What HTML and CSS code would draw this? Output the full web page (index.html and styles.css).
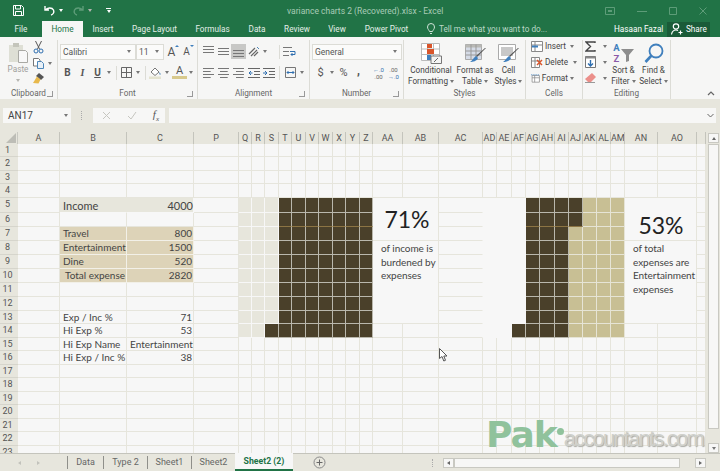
FILE: index.html
```html
<!DOCTYPE html>
<html>
<head>
    <meta charset="utf-8">
    <title>variance charts 2 (Recovered).xlsx - Excel</title>
    <link rel="stylesheet" href="styles.css">
</head>
<body>
    <div class="titlebar">
        <div class="qat">
            <svg class="qat-save" width="11" height="11" viewBox="0 0 11 11"><path d="M.5.500h8l2 2v8H.5z" fill="none" stroke="#fff"/><path d="M2.500 1v3h5V1M2.500 10V6.500h6V10" fill="none" stroke="#fff"/></svg>
            <svg class="qat-undo" width="11" height="11" viewBox="0 0 11 11"><path d="M1 1v4h4M1.500 5C3 2.500 8 2 9.500 5c1 2.500-.5 4.500-2.500 5" fill="none" stroke="#fff" stroke-width="1.400"/></svg>
            <span class="caret caret-white qat-caret"></span>
            <svg class="qat-redo" width="11" height="11" viewBox="0 0 11 11"><path d="M10 1v4H6M9.500 5C8 2.500 3 2 1.500 5c-1 2.500.5 4.500 2.500 5" fill="none" stroke="#5d9c78" stroke-width="1.400"/></svg>
            <span class="caret caret-faded qat-caret"></span>
            <span class="qat-custom"><span class="qat-bar"></span><span class="caret caret-white"></span></span>
        </div>
        <div class="doc-title">variance charts 2 (Recovered).xlsx - Excel</div>
        <div class="window-btns">
            <svg width="10" height="8" viewBox="0 0 10 8"><path d="M.5.500h9v7h-9z" fill="none" stroke="#5d9c78"/><path d="M3 3h4v2H3z" fill="#5d9c78"/></svg>
            <svg width="10" height="8" viewBox="0 0 10 8"><path d="M0 4.500h10" stroke="#5d9c78"/></svg>
            <svg width="8" height="8" viewBox="0 0 8 8"><path d="M.5.500h7v7h-7z" fill="none" stroke="#5d9c78"/></svg>
            <svg width="8" height="8" viewBox="0 0 8 8"><path d="M.5.500l7 7M7.500.500l-7 7" stroke="#5d9c78"/></svg>
        </div>
    </div>

    <div class="tabs">
        <span class="tab">File</span>
        <span class="tab tab-active">Home</span>
        <span class="tab">Insert</span>
        <span class="tab">Page Layout</span>
        <span class="tab">Formulas</span>
        <span class="tab">Data</span>
        <span class="tab">Review</span>
        <span class="tab">View</span>
        <span class="tab">Power Pivot</span>
        <span class="tell-me">
            <svg width="8" height="12" viewBox="0 0 8 12"><path d="M2.500 8.500C2 7 .5 6 .5 4a3.500 3.500 0 0 1 7 0c0 2-1.500 3-2 4.500zM3 10.500h2" fill="none" stroke="#cfe3d7"/></svg>
            Tell me what you want to do...
        </span>
        <span class="user">Hasaan Fazal</span>
        <span class="share">
            <svg width="12" height="12" viewBox="0 0 12 12"><circle cx="5" cy="3.500" r="2.700" fill="none" stroke="#fff" stroke-width="1.200"/><path d="M.5 11.500c.5-3 2-4.500 4.500-4.500 1 0 1.500.2 2 .5M9.500 7.500v4M7.500 9.500h4" fill="none" stroke="#fff" stroke-width="1.200"/></svg>
            Share
        </span>
    </div>

    <div class="ribbon">
        <!-- Clipboard -->
        <div class="group group-clipboard">
            <div class="group-body clip-body">
                <div class="paste">
                    <svg width="21" height="21" viewBox="0 0 21 21"><path d="M1 3h14v17H1z" fill="#dedfd5"/><path d="M5 1h6v4H5z" fill="#c4c5bb"/><path d="M10.500 8.500h7l2 2v10h-9z" fill="#f8f8f8" stroke="#a9a9a4"/></svg>
                    <span class="paste-label">Paste</span>
                    <span class="caret caret-faded"></span>
                </div>
                <div class="clip-tools">
                    <svg width="11" height="13" viewBox="0 0 11 13"><path d="M2.500 0l4 8M8.500 0l-4 8" stroke="#555" fill="none"/><circle cx="3" cy="10" r="2" fill="none" stroke="#2f6fb0"/><circle cx="8" cy="10" r="2" fill="none" stroke="#2f6fb0"/></svg>
                    <span class="clip-row">
                        <svg width="11" height="11" viewBox="0 0 11 11"><path d="M.5.500h5l1.500 1.500v6H.5z" fill="#fff" stroke="#777"/><path d="M4.500 3.500h4l2 2v5h-6z" fill="#e8f0f7" stroke="#4d86b8"/></svg>
                        <span class="caret"></span>
                    </span>
                    <svg width="11" height="11" viewBox="0 0 11 11"><path d="M6 0l5 4-3 3-5-4z" fill="#555"/><path d="M4 3.500l3.500 3-2 4L0 10z" fill="#e8b94c"/></svg>
                </div>
            </div>
            <div class="group-label">Clipboard <span class="launcher"></span></div>
        </div>

        <!-- Font -->
        <div class="group group-font">
            <div class="group-body">
                <div class="tool-row">
                    <span class="combo combo-font">Calibri<span class="caret"></span></span>
                    <span class="combo combo-size">11<span class="caret"></span></span>
                    <span class="btn btn-a">A<sup class="grow grow-up"></sup></span>
                    <span class="btn btn-a btn-a-small">A<sup class="grow grow-down"></sup></span>
                </div>
                <div class="tool-row">
                    <span class="btn glyph bold">B</span>
                    <span class="btn glyph italic">I</span>
                    <span class="btn glyph underline">U</span>
                    <span class="btn-caret"><span class="caret"></span></span>
                    <span class="sep"></span>
                    <span class="btn">
                        <svg width="11" height="11" viewBox="0 0 11 11"><path d="M.5.500h10v10H.5zM5.500.500v10M.5 5.500h10" fill="none" stroke="#666"/></svg>
                    </span>
                    <span class="btn-caret"><span class="caret"></span></span>
                    <span class="sep"></span>
                    <span class="btn">
                        <svg width="13" height="13" viewBox="0 0 13 13"><path d="M2 6l4-4 4 4-4 3.500z" fill="#fff" stroke="#777"/><path d="M10.500 6c1 1.500 1.500 2 1 2.500-.8.500-1.500 0-1-2.500z" fill="#4d86b8"/><path d="M0 10.500h12V13H0z" fill="#e4e3cf"/></svg>
                    </span>
                    <span class="btn-caret"><span class="caret"></span></span>
                    <span class="btn color-a">A</span>
                    <span class="btn-caret"><span class="caret"></span></span>
                </div>
            </div>
            <div class="group-label">Font <span class="launcher"></span></div>
        </div>

        <!-- Alignment -->
        <div class="group group-align">
            <div class="group-body">
                <div class="tool-row">
                    <span class="btn"><span class="lines lines-top"></span></span>
                    <span class="btn"><span class="lines lines-mid"></span></span>
                    <span class="btn btn-on"><span class="lines lines-bottom"></span></span>
                    <span class="btn">
                        <svg width="12" height="11" viewBox="0 0 12 11"><path d="M1 8l6-6M3 10l6-6M6 10l4-4" stroke="#666" fill="none" stroke-width="1.200"/><path d="M9 1l2 2" stroke="#4d86b8"/></svg>
                    </span>
                    <span class="btn-caret"><span class="caret"></span></span>
                    <span class="sep sep-wrap"></span>
                    <span class="btn">
                        <svg width="13" height="12" viewBox="0 0 13 12"><path d="M0 1.500h9M0 5.500h6M0 9.500h6" stroke="#777" fill="none"/><path d="M7 5.500h5v3H8" stroke="#2f6fb0" fill="none"/><path d="M9.500 7L8 8.500 9.500 10" stroke="#2f6fb0" fill="none"/></svg>
                    </span>
                </div>
                <div class="tool-row">
                    <span class="btn"><span class="lines lines-left"></span></span>
                    <span class="btn"><span class="lines lines-center"></span></span>
                    <span class="btn"><span class="lines lines-right"></span></span>
                    <span class="btn">
                        <svg width="12" height="10" viewBox="0 0 12 10"><path d="M0 .5h12M6 3.500h6M6 6.500h6M0 9.500h12" stroke="#666"/><path d="M4.500 5H1M3 3L1 5l2 2" stroke="#2f6fb0" fill="none"/></svg>
                    </span>
                    <span class="btn">
                        <svg width="12" height="10" viewBox="0 0 12 10"><path d="M0 .5h12M6 3.500h6M6 6.500h6M0 9.500h12" stroke="#666"/><path d="M0 5h3.500M2 3l2 2-2 2" stroke="#2f6fb0" fill="none"/></svg>
                    </span>
                    <span class="sep sep-merge"></span>
                    <span class="btn">
                        <svg width="11" height="11" viewBox="0 0 11 11"><path d="M.5.500h10v10H.5z" fill="none" stroke="#777"/><path d="M2 5.500h7M3.500 4L2 5.500 3.500 7M7.500 4L9 5.500 7.500 7" stroke="#2f6fb0" fill="none"/></svg>
                    </span>
                    <span class="btn-caret"><span class="caret"></span></span>
                </div>
            </div>
            <div class="group-label">Alignment <span class="launcher"></span></div>
        </div>

        <!-- Number -->
        <div class="group group-number">
            <div class="group-body">
                <div class="tool-row">
                    <span class="combo combo-number">General<span class="caret"></span></span>
                </div>
                <div class="tool-row">
                    <span class="btn glyph money">$</span>
                    <span class="btn-caret"><span class="caret"></span></span>
                    <span class="btn glyph percent">%</span>
                    <span class="btn glyph comma">,</span>
                    <span class="btn decimals"><i>&#8592;.0</i><i class="dec-grey">.00</i></span>
                    <span class="btn decimals"><i class="dec-grey">.00</i><i>&#8594;.0</i></span>
                </div>
            </div>
            <div class="group-label">Number <span class="launcher"></span></div>
        </div>

        <!-- Styles -->
        <div class="group group-styles">
            <div class="group-body big-row">
                <div class="big big-cond">
                    <svg width="21" height="21" viewBox="0 0 21 21"><path d="M.5.500h18v17H.5zM6.500.500v17M12.500.500v17M.5 6h18M.5 11.500h18" fill="#fff" stroke="#bbb"/><path d="M6 1h5v4H6z" fill="#d9552b"/><path d="M6 6h7v5H6z" fill="#d9552b"/><path d="M6 12h4v5H6z" fill="#3f7fbd"/><path d="M10 13h10.500v7.500H10z" fill="#f4f4f4" stroke="#777"/><path d="M13 19l4-4" stroke="#666"/></svg>
                    <span class="big-label">Conditional<br>Formatting<span class="caret"></span></span>
                </div>
                <div class="big big-table">
                    <svg width="21" height="21" viewBox="0 0 21 21"><path d="M.5 1.500h16v15H.5z" fill="#d5dbe6" stroke="#aaa"/><path d="M.5 1.500h16v3H.5z" fill="#b9b9b5"/><path d="M6 1.500v15M11 1.500v15M.5 8h16M.5 12h16" stroke="#999" fill="none"/><path d="M21 5l-9 9-1-1 9-8z" fill="#555"/><path d="M11 13l2 2c-1 3-5 4-8 4 2-1 3-4 6-6z" fill="#3f7fbd"/></svg>
                    <span class="big-label">Format as<br>Table<span class="caret"></span></span>
                </div>
                <div class="big big-cell">
                    <svg width="21" height="21" viewBox="0 0 21 21"><path d="M.5 1.500h17v15H.5z" fill="#fff" stroke="#aaa"/><path d="M3 4h12v9H3z" fill="#c8c8c8"/><path d="M21 5l-9 9-1-1 9-8z" fill="#555"/><path d="M11 13l2 2c-1 3-5 4-8 4 2-1 3-4 6-6z" fill="#3f7fbd"/></svg>
                    <span class="big-label">Cell<br>Styles<span class="caret"></span></span>
                </div>
            </div>
            <div class="group-label">Styles</div>
        </div>

        <!-- Cells -->
        <div class="group group-cells">
            <div class="group-body cell-rows">
                <div class="cell-row">
                    <svg width="12" height="11" viewBox="0 0 12 11"><path d="M.5.500h11v10H.5zM.5 4h11M4 .5v10" fill="#fff" stroke="#888"/><path d="M1 4.500h6v2H1z" fill="#3f7fbd"/></svg>
                    <span>Insert</span><span class="caret"></span>
                </div>
                <div class="cell-row">
                    <svg width="12" height="11" viewBox="0 0 12 11"><path d="M.5.500h8v10h-8zM.5 4h8M4 .5v10" fill="#fff" stroke="#888"/><path d="M6 3l5 5M11 3L6 8" stroke="#d9552b" stroke-width="1.500"/></svg>
                    <span>Delete</span><span class="caret caret-delete"></span>
                </div>
                <div class="cell-row">
                    <svg width="12" height="11" viewBox="0 0 12 11"><path d="M1.500 1.500h10v9h-10zM1.500 4.500h10M5 1.500v9" fill="#fff" stroke="#888"/><path d="M0 .5h12" stroke="#3f7fbd" stroke-dasharray="2 1"/></svg>
                    <span>Format</span><span class="caret"></span>
                </div>
            </div>
            <div class="group-label">Cells</div>
        </div>

        <!-- Editing -->
        <div class="group group-editing">
            <div class="group-body big-row">
                <div class="edit-tools">
                    <span class="edit-row">
                        <svg width="11" height="11" viewBox="0 0 11 11"><path d="M10 2V1H1l4.500 4.500L1 10h9V9" fill="none" stroke="#444" stroke-width="1.400"/></svg>
                        <span class="caret"></span>
                    </span>
                    <span class="edit-row">
                        <svg width="11" height="12" viewBox="0 0 11 12"><path d="M.5.500h10v11H.5z" fill="#fff" stroke="#777"/><path d="M.5.500h10v2H.5z" fill="#888"/><path d="M5.500 4v6M3 7.500L5.500 10 8 7.500" fill="none" stroke="#2f6fb0" stroke-width="1.400"/></svg>
                        <span class="caret"></span>
                    </span>
                    <span class="edit-row">
                        <svg width="11" height="10" viewBox="0 0 11 10"><path d="M7 0l4 4-5 5H3L0 6z" fill="#eb8f8a"/><path d="M0 9.500h10" stroke="#999"/></svg>
                        <span class="caret"></span>
                    </span>
                </div>
                <div class="big big-sort">
                    <span class="sort-icon">
                        <span class="sort-letters"><span class="sort-a">A</span><span class="sort-z">Z</span></span>
                        <svg width="13" height="14" viewBox="0 0 13 14"><path d="M0 1h13L8 7v6l-3 1V7z" fill="#8d8d8d"/></svg>
                    </span>
                    <span class="big-label">Sort &amp;<br>Filter<span class="caret"></span></span>
                </div>
                <div class="big big-find">
                    <svg width="20" height="21" viewBox="0 0 20 21"><circle cx="12" cy="8" r="6.500" fill="none" stroke="#3f7fbd" stroke-width="1.800"/><path d="M7.500 12.500L1.500 19" stroke="#3f7fbd" stroke-width="2.600"/></svg>
                    <span class="big-label">Find &amp;<br>Select<span class="caret"></span></span>
                </div>
            </div>
            <div class="group-label">Editing</div>
        </div>

        <svg class="collapse" width="8" height="5" viewBox="0 0 8 5"><path d="M1 4l3-3 3 3" fill="none" stroke="#666" stroke-width="1.200"/></svg>
    </div>

    <div class="formula-band">
        <div class="name-box">AN17<span class="caret"></span></div>
        <div class="grip"></div>
        <div class="fx-box">
            <svg width="9" height="9" viewBox="0 0 9 9"><path d="M1 1l7 7M8 1L1 8" stroke="#c6c6c0"/></svg>
            <svg width="10" height="9" viewBox="0 0 10 9"><path d="M1 5l3 3 5-7" fill="none" stroke="#c6c6c0"/></svg>
            <span class="fx">f<sub>x</sub></span>
        </div>
        <div class="formula-input">
            <svg width="7" height="5" viewBox="0 0 7 5"><path d="M.5 1l3 3 3-3" fill="none" stroke="#666"/></svg>
        </div>
    </div>

    <div class="sheet-area">
        <div class="sheet" id="sheet"></div>
        <div class="vscroll">
            <span class="scroll-btn"><span class="caret caret-up"></span></span>
            <span class="vthumb"></span>
            <span class="scroll-btn scroll-down"><span class="caret"></span></span>
        </div>
        <svg class="cursor" width="9" height="14" viewBox="0 0 9 14"><path d="M.5.500v10l2.500-2 1.800 4.500 1.700-.7L4.800 8H8z" fill="#fff" stroke="#555"/></svg>
        <div class="watermark"><span class="wm-pak">Pak</span><span class="wm-dot"></span><span class="wm-rest">accountants.com</span></div>
    </div>

    <div class="sheet-tabs">
        <span class="nav-arrow nav-left"></span>
        <span class="nav-arrow nav-right"></span>
        <span class="sheet-tab">Data</span>
        <span class="sheet-tab tab-type">Type 2</span>
        <span class="sheet-tab">Sheet1</span>
        <span class="sheet-tab">Sheet2</span>
        <span class="sheet-tab sheet-tab-active">Sheet2 (2)</span>
        <svg class="add-sheet" width="13" height="13" viewBox="0 0 13 13"><circle cx="6.500" cy="6.500" r="5.500" fill="none" stroke="#888"/><path d="M3.500 6.500h6M6.500 3.500v6" stroke="#666"/></svg>
        <span class="tab-grip"></span>
        <span class="hscroll">
            <span class="scroll-btn"><span class="caret-left"></span></span>
            <span class="hthumb"></span>
            <span class="scroll-btn scroll-right"><span class="caret-right"></span></span>
        </span>
    </div>

    <script>
        const columns = ["A", "B", "C", "P", "Q", "R", "S", "T", "U", "V", "W", "X", "Y", "Z", "AA", "AB", "AC",
            "AD", "AE", "AF", "AG", "AH", "AI", "AJ", "AK", "AL", "AM", "AN", "AO", ""];

        // Contents of the worksheet, by cell
        const values = {
            B5: ["Income", "big-text"], C5: ["4000", "num big-num"],
            B7: ["Travel"], C7: ["800", "num"],
            B8: ["Entertainment"], C8: ["1500", "num"],
            B9: ["Dine"], C9: ["520", "num"],
            B10: ["Total expense", "indent"], C10: ["2820", "num"],
            B13: ["Exp / Inc %"], C13: ["71", "num"],
            B14: ["Hi Exp %"], C14: ["53", "num"],
            B15: ["Hi Exp Name"], C15: ["Entertainment", "left-pad"],
            B16: ["Hi Exp / Inc %"], C16: ["38", "num"]
        };

        const notes = {
            AA: { big: "71%", lines: "of income is<br>burdened by<br>expenses" },
            AN: { big: "53%", lines: "of total<br>expenses are<br>Entertainment<br>expenses" }
        };

        const sheet = document.getElementById("sheet");

        function addCell(className, text) {
            const cell = document.createElement("div");
            cell.className = className;
            if (text) cell.innerHTML = text;
            sheet.appendChild(cell);
            return cell;
        }

        function fillFor(col, row) {
            if (row < 5 || row > 14) return "";
            const i = columns.indexOf(col);
            const q = columns.indexOf("Q"), s = columns.indexOf("S"), t = columns.indexOf("T"), z = columns.indexOf("Z");
            const ad = columns.indexOf("AD"), af = columns.indexOf("AF"), ag = columns.indexOf("AG");
            const ai = columns.indexOf("AI"), aj = columns.indexOf("AJ"), am = columns.indexOf("AM");

            if (col === "S" && row === 14) return " dark";
            if (col === "AF" && row === 14) return " dark";
            if (i >= q && i <= s) return " cream";
            if (i >= t && i <= z) return row === 6 ? " dark seam" : " dark";
            if (i >= ad && i <= af) return " clear";
            if (i >= ag && i <= ai) return row === 6 ? " dark seam" : " dark";
            if (i === aj && row <= 6) return row === 6 ? " dark seam" : " dark";
            if (i >= aj && i <= am) return " tan";
            if (col === "AC") return " open-right";
            return "";
        }

        function fillForData(col, row) {
            if (row === 5 && (col === "B" || col === "C")) return col === "B" ? " cream open-right" : " cream";
            if (row >= 7 && row <= 10 && (col === "B" || col === "C")) return " sand";
            return "";
        }

        // Header row
        addCell("corner");
        columns.forEach(col => addCell("col-head", col));

        for (let row = 1; row <= 23; row++) {
            addCell("row-head", String(row));
            columns.forEach(col => {
                const inNote = (col === "AA" || col === "AB" || col === "AN" || col === "AO") && row >= 5 && row <= 13;
                if (inNote) {
                    // the two merged blocks are emitted once, from their first column
                    if (notes[col] && row === 5) addCell("cell note-big note-" + col, notes[col].big);
                    if (notes[col] && row === 8) addCell("cell note-text note-text-" + col, notes[col].lines);
                    return;
                }
                const value = values[col + row] || [];
                let cls = "cell" + fillFor(col, row) + fillForData(col, row);
                if (value[1]) cls += " " + value[1];
                addCell(cls, value[0]);
            });
        }
    </script>
</body>
</html>
```

FILE: styles.css
```css
* {
    box-sizing: border-box;
}

html, body {
    margin: 0;
    height: 471px;
    overflow: hidden;
}

body {
    font-family: Roboto, Arial, sans-serif;
    font-size: 8.2px;
    color: #444;
    background-color: #e7e6dd;
    width: 720px;
}

.caret {
    display: inline-block;
    width: 0;
    height: 0;
    border-left: 2.5px solid transparent;
    border-right: 2.5px solid transparent;
    border-top: 3px solid #777;
}

.caret-white { border-top-color: #fff; }
.caret-faded { border-top-color: #b5b5b0; }

.caret-up {
    border-top: 0;
    border-bottom: 3px solid #666;
}

/* Title bar */
.titlebar {
    height: 21px;
    background-color: #217346;
    display: grid;
    grid-template-columns: 287px 1fr 120px;
    align-items: center;
}

.qat {
    display: flex;
    align-items: center;
    padding-left: 13px;
}

.qat-undo { margin-left: 20px; }
.qat-caret { margin-left: 4px; }
.qat-redo { margin-left: 10px; }
.qat-custom {
    margin-left: 14px;
    display: flex;
    flex-direction: column;
    align-items: center;
    gap: 1px;
}

.qat-bar {
    width: 5px;
    height: 1px;
    background-color: #fff;
}

.doc-title {
    color: #a8cbb6;
    font-size: 8.5px;
    padding-top: 1px;
}

.window-btns {
    display: flex;
    align-items: center;
    gap: 22px;
    padding-left: 5px;
}

/* Tab strip */
.tabs {
    height: 16px;
    background-color: #217346;
    display: grid;
    grid-template-columns: 42px 41px 40px 63px 53px 36px 44px 36px 63px 196px 53px 43px;
    align-items: center;
    color: #fff;
    font-size: 8.2px;
    text-align: center;
}

.tab {
    line-height: 16px;
    color: #e4efe8;
}

.tab-active {
    background-color: #f6f6f5;
    color: #217346;
}

.tell-me {
    color: #bcd8c7;
    text-align: left;
    padding-left: 9px;
    display: flex;
    align-items: center;
    gap: 4px;
}

.user {
    text-align: left;
    color: #fff;
    white-space: nowrap;
}

.share {
    background-color: #1a5b38;
    height: 15px;
    display: flex;
    align-items: center;
    gap: 3px;
    padding-left: 4px;
}

/* Ribbon */
.ribbon {
    height: 62px;
    background-color: #f6f6f5;
    display: flex;
    position: relative;
}

.group {
    display: flex;
    flex-direction: column;
    height: 59px;
    border-right: 1px solid #dcdcd6;
    margin-top: 3px;
    position: relative;
}

.group-clipboard { width: 58px; }
.group-font { width: 140px; }
.group-align { width: 112px; }
.group-number { width: 94px; }
.group-styles { width: 122px; }
.group-cells { width: 57px; }
.group-editing { width: 88px; }

.group-body {
    flex: 1;
    padding-top: 4px;
    display: flex;
    flex-direction: column;
    gap: 6px;
}

.group-label {
    height: 12px;
    line-height: 12px;
    text-align: center;
    color: #666;
    font-size: 8.2px;
}

.launcher {
    position: absolute;
    right: 4px;
    bottom: 2px;
    width: 6px;
    height: 6px;
    border-right: 1px solid #999;
    border-bottom: 1px solid #999;
}

.tool-row {
    display: flex;
    align-items: center;
    height: 15px;
}

.group-font .tool-row { padding-left: 2px; }
.group-align .tool-row { padding-left: 3px; }
.group-number .tool-row { padding-left: 2px; }

.btn {
    width: 15px;
    height: 15px;
    display: flex;
    align-items: center;
    justify-content: center;
    flex: none;
}

.btn-caret {
    width: 8px;
    display: flex;
    justify-content: center;
    flex: none;
}

.btn-on {
    background-color: #c8c8c6;
}

.sep {
    width: 1px;
    height: 14px;
    background-color: #dcdcd6;
    margin: 0 2px 0 3px;
    flex: none;
}

.sep-wrap { margin: 0 2px 0 10px; }
.sep-merge { margin: 0 3px 0 3px; }

.glyph {
    color: #555;
    font-size: 10px;
}

.bold { font-weight: 700; }
.italic { font-style: italic; font-family: "Liberation Serif", serif; font-weight: 700; }
.underline { text-decoration: underline; font-weight: 700; }

.combo {
    height: 16px;
    background-color: #fbfbfa;
    border: 1px solid #dcdcd6;
    display: flex;
    align-items: center;
    justify-content: space-between;
    padding: 0 4px 0 2px;
    color: #555;
    font-size: 8.5px;
    flex: none;
}

.combo-font { width: 76px; }
.combo-size { width: 28px; }
.combo-number { width: 90px; }

.btn-a {
    font-size: 12px;
    color: #555;
    margin-left: 0;
    position: relative;
}

.btn-a-small { font-size: 10px; }

.grow {
    position: absolute;
    top: 1px;
    right: 0;
    width: 0;
    height: 0;
    border-left: 2px solid transparent;
    border-right: 2px solid transparent;
}

.grow-up { border-bottom: 2px solid #3f7fbd; }
.grow-down { border-top: 2px solid #3f7fbd; }

.color-a {
    font-size: 11px;
    color: #555;
    border-bottom: 3px solid #d8c98c;
    height: 13px;
    line-height: 10px;
    margin-left: 1px;
}

.lines {
    display: block;
    width: 11px;
    height: 8px;
    background:
        linear-gradient(#777, #777) 0 0 / 100% 1px no-repeat,
        linear-gradient(#777, #777) 0 3px / 100% 1px no-repeat,
        linear-gradient(#777, #777) 0 6px / 100% 1px no-repeat;
}

.lines-top { margin-bottom: 4px; }
.lines-bottom { margin-top: 4px; height: 7px; }

.lines-left {
    height: 10px;
    background:
        linear-gradient(#777, #777) 0 0 / 100% 1px no-repeat,
        linear-gradient(#777, #777) 0 3px / 70% 1px no-repeat,
        linear-gradient(#777, #777) 0 6px / 100% 1px no-repeat,
        linear-gradient(#777, #777) 0 9px / 70% 1px no-repeat;
}

.lines-center {
    height: 10px;
    background:
        linear-gradient(#777, #777) 0 0 / 100% 1px no-repeat,
        linear-gradient(#777, #777) 50% 3px / 70% 1px no-repeat,
        linear-gradient(#777, #777) 0 6px / 100% 1px no-repeat,
        linear-gradient(#777, #777) 50% 9px / 70% 1px no-repeat;
}

.lines-right {
    height: 10px;
    background:
        linear-gradient(#777, #777) 0 0 / 100% 1px no-repeat,
        linear-gradient(#777, #777) 100% 3px / 70% 1px no-repeat,
        linear-gradient(#777, #777) 0 6px / 100% 1px no-repeat,
        linear-gradient(#777, #777) 100% 9px / 70% 1px no-repeat;
}

.money { font-size: 11px; width: 15px; margin-left: 1px; }
.percent { font-size: 11px; }
.comma { font-size: 12px; margin-right: 5px; margin-top: -4px; font-weight: 700; }

.decimals {
    flex-direction: column;
    font-size: 6px;
    line-height: 7px;
    color: #2f6fb0;
}

.decimals i {
    font-style: normal;
}

.decimals .dec-grey {
    color: #666;
}

/* Clipboard group */
.clip-body {
    flex-direction: row;
    padding: 2px 0 0 7px;
    gap: 4px;
}

.paste {
    display: flex;
    flex-direction: column;
    align-items: center;
    width: 22px;
    color: #a0a09c;
}

.paste-label { line-height: 13px; }
.paste .caret { margin-top: 3px; }

.clip-tools {
    display: flex;
    flex-direction: column;
    gap: 4px;
    margin-top: -1px;
}

.clip-row {
    display: flex;
    align-items: center;
    gap: 4px;
}

/* Big ribbon buttons */
.big-row {
    flex-direction: row;
    gap: 0;
    padding-top: 3px;
}

.big {
    display: flex;
    flex-direction: column;
    align-items: center;
    text-align: center;
    flex: none;
}

.big-cond { width: 54px; }
.big-table { width: 34px; }
.big-cell { width: 33px; }
.big-sort { width: 33px; }
.big-find { width: 27px; }

.big-label {
    line-height: 11px;
    margin-top: 1px;
    white-space: nowrap;
    font-size: 8.2px;
}

.big-label .caret {
    margin-left: 2px;
    vertical-align: 1px;
}

.sort-icon {
    display: flex;
    height: 21px;
    align-items: flex-start;
    gap: 1px;
}

.sort-icon svg {
    margin-top: 5px;
}

.sort-letters {
    display: flex;
    flex-direction: column;
    font-size: 9.5px;
    line-height: 10.5px;
    font-weight: 700;
}

.sort-a { color: #3f7fbd; }
.sort-z { color: #8a5aa8; }

/* Cells group */
.cell-rows {
    padding: 0 0 0 5px;
    gap: 4px;
}

.cell-row {
    display: flex;
    align-items: center;
    height: 12px;
    gap: 2px;
    position: relative;
}

.cell-row .caret {
    margin-left: auto;
    margin-right: 8px;
}

.cell-row .caret-delete {
    margin-right: 5px;
}

/* Editing group */
.edit-tools {
    width: 24px;
    margin-top: -3px;
    padding-left: 2px;
    display: flex;
    flex-direction: column;
    gap: 4px;
    flex: none;
}

.edit-row {
    display: flex;
    align-items: center;
    justify-content: space-between;
    height: 12px;
}

.collapse {
    align-self: flex-end;
    margin: 0 0 3px 36px;
}

/* Formula bar */
.formula-band {
    height: 33px;
    display: flex;
    padding: 9px 4px 0 3px;
    align-items: flex-start;
}

.name-box {
    width: 68px;
    height: 15px;
    background-color: #f7f7f6;
    display: flex;
    align-items: center;
    justify-content: space-between;
    padding: 0 3px 0 5px;
    font-size: 10px;
}

.grip {
    width: 1px;
    height: 9px;
    margin: 3px 11px 0 10px;
    border-left: 1px dotted #aaa;
}

.fx-box {
    width: 72px;
    height: 15px;
    background-color: #f7f7f6;
    display: flex;
    align-items: center;
    justify-content: space-between;
    padding: 0 6px 0 9px;
    margin-right: 4px;
}

.fx {
    font-family: "Liberation Serif", serif;
    font-style: italic;
    font-size: 11px;
    color: #555;
}

.fx sub {
    font-size: 7px;
}

.formula-input {
    flex: 1;
    height: 15px;
    background-color: #f7f7f6;
    display: flex;
    align-items: center;
    justify-content: flex-end;
    padding-right: 2px;
}

/* Worksheet */
.sheet-area {
    height: 321px;
    display: flex;
    position: relative;
}

.sheet {
    width: 706px;
    height: 321px;
    overflow: hidden;
    display: grid;
    grid-template-columns: 18px 42px 67px 67px 45px 13px 13px 14px 13px 14px 13px 14px 13px 14px 13px 30px 36px 44px 14px 15px 14px 14px 15px 14px 14px 14px 14px 14px 33px 39px 9px;
    grid-template-rows: 12px 13px 14px 13px 14px 15px 14px 14px 14px 14px 14px 14px 14px 13px 14px 13px 14px 13px 14px 13px 14px 13px 14px 14px;
    font-family: Lato, "Open Sans", sans-serif;
    font-size: 10px;
    line-height: 13px;
    color: #444;
}

.corner {
    position: relative;
    border-right: 1px solid #c9c9c2;
}

.corner::after {
    content: "";
    position: absolute;
    right: 1px;
    bottom: 1px;
    border-left: 10px solid transparent;
    border-bottom: 10px solid #bdbdb6;
}

.col-head {
    border-right: 1px solid #c4c4bc;
    text-align: center;
    font-family: Roboto, sans-serif;
    font-size: 9px;
    line-height: 12px;
    color: #555;
    overflow: hidden;
    white-space: nowrap;
}

.row-head {
    border-bottom: 1px solid #d6d5cc;
    text-align: center;
    font-family: Roboto, sans-serif;
    font-size: 9px;
    line-height: 13px;
    color: #555;
    padding-right: 3px;
    overflow: hidden;
}

.cell {
    background-color: #f7f7f7;
    border-right: 1px solid #e6e5dc;
    border-bottom: 1px solid #e6e5dc;
    white-space: nowrap;
    overflow: visible;
    padding-left: 3px;
}

.num {
    text-align: right;
    padding: 0 1px 0 0;
}

.big-text, .big-num {
    font-size: 11px;
    line-height: 15px;
}

.big-num { padding-right: 0; }

.indent { padding-left: 5px; }

.cream {
    background-color: #e7e6dc;
    border-color: #f7f7f7;
}

.sand {
    background-color: #ddd3b8;
    border-color: #f2f0e8;
}

.dark {
    background-color: #4a402a;
    border-color: #b9b7ac;
}

.seam {
    border-bottom-color: #8c7443;
}

.tan {
    background-color: #c8bf94;
    border-color: #e6e4d6;
}

.clear {
    border-color: #f7f7f7;
}

.open-right {
    border-right-color: transparent;
}

.note-big {
    grid-column: span 2;
    grid-row: span 3;
    font-size: 23px;
    color: #222;
    text-align: center;
    display: flex;
    align-items: center;
    justify-content: center;
    padding: 0 0 0 3px;
}

.note-AN {
    padding-top: 12px;
    padding-left: 1px;
}

.note-text {
    grid-column: span 2;
    grid-row: span 6;
    padding: 1px 0 0 8px;
    line-height: 13.5px;
    font-size: 10px;
    letter-spacing: -0.05px;
}

.cursor {
    position: absolute;
    left: 439px;
    top: 216px;
}

.watermark {
    position: absolute;
    left: 486px;
    top: 283px;
    height: 33px;
    display: flex;
    align-items: flex-end;
    white-space: nowrap;
}

.wm-pak {
    font-family: "DejaVu Sans", sans-serif;
    font-size: 36px;
    font-weight: 700;
    line-height: 38px;
    color: #90c29c;
    letter-spacing: -1px;
    margin-bottom: -6px;
}

.wm-dot {
    width: 7px;
    height: 7px;
    border-radius: 50%;
    background-color: #90c29c;
    margin: 0 0 13px 0;
}

.wm-rest {
    font-family: "Liberation Sans", sans-serif;
    font-size: 22px;
    line-height: 28px;
    color: #cfd0cb;
    letter-spacing: -1.8px;
    text-shadow: 1px 1px 1px #a9aaa5;
    margin-bottom: -5px;
}

/* Scroll bars */
.vscroll {
    width: 14px;
    display: flex;
    flex-direction: column;
    padding: 1px 1px 0 2px;
}

.scroll-btn {
    width: 11px;
    height: 10px;
    background-color: #f7f7f6;
    border: 1px solid #c9c9c2;
    display: flex;
    align-items: center;
    justify-content: center;
    flex: none;
}

.vthumb {
    height: 285px;
    background-color: #f7f7f6;
    border: 1px solid #c9c9c2;
    margin-top: 1px;
}

.scroll-down {
    margin-top: 14px;
}

.sheet-tabs {
    height: 18px;
    border-top: 1px solid #c4c4bc;
    display: flex;
    align-items: center;
    position: relative;
}

.nav-arrow {
    width: 0;
    height: 0;
    border-top: 2.5px solid transparent;
    border-bottom: 2.5px solid transparent;
}

.nav-left {
    border-right: 3px solid #c2c2bc;
    margin-left: 18px;
}

.nav-right {
    border-left: 3px solid #c2c2bc;
    margin-left: 16px;
    margin-right: 27px;
}

.sheet-tab {
    height: 13px;
    line-height: 13px;
    border-left: 1px solid #8f8f8a;
    width: 44px;
    text-align: center;
    color: #666;
    font-size: 9px;
}

.sheet-tab:nth-of-type(3) { width: 36px; }

.sheet-tab-active {
    height: 18px;
    line-height: 17px;
    width: 58px;
    background-color: #f7f7f7;
    border-left: 0;
    border-bottom: 2px solid #217346;
    color: #217346;
    font-size: 8.7px;
    font-weight: 700;
    margin-top: -1px;
}

.add-sheet {
    margin-left: 20px;
}

.tab-grip {
    width: 1px;
    height: 8px;
    border-left: 1px dotted #aaa;
    margin-left: 106px;
}

.hscroll {
    display: flex;
    align-items: center;
    margin-left: 10px;
}

.hthumb {
    width: 226px;
    height: 10px;
    background-color: #f7f7f6;
    border: 1px solid #c9c9c2;
}

.scroll-right {
    margin-left: 15px;
}

.caret-left {
    border-top: 2.5px solid transparent;
    border-bottom: 2.5px solid transparent;
    border-right: 3px solid #666;
}

.caret-right {
    border-top: 2.5px solid transparent;
    border-bottom: 2.5px solid transparent;
    border-left: 3px solid #666;
}
```
